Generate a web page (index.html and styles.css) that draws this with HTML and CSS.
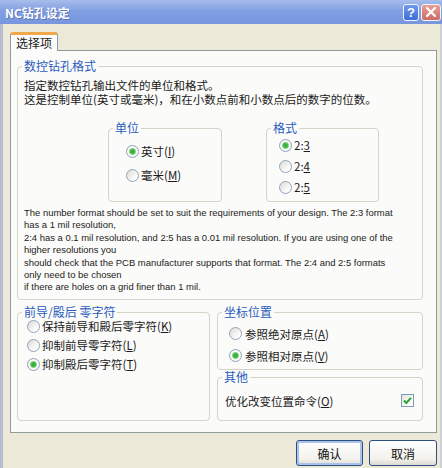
FILE: index.html
```html
<!doctype html>
<html lang="zh-cn">
<head>
	<meta charset="utf-8">
	<title>NC钻孔设定</title>
	<link rel="stylesheet" href="styles.css">
</head>
<body>

<div class="titlebar">
	<span class="title">NC钻孔设定</span>
	<span class="tbtn help">?</span>
	<span class="tbtn close">
		<svg width="12" height="12" viewBox="0 0 12 12"><path d="M2 2L10 10M10 2L2 10" stroke="#fff" stroke-width="2.2" stroke-linecap="round"/></svg>
	</span>
</div>

<div class="body">
	<div class="tabs"><span class="tab">选择项</span></div>

	<div class="panel">
		<div class="group main">
			<div class="gtitle">数控钻孔格式</div>
			<p class="desc">指定数控钻孔输出文件的单位和格式。<br>这是控制单位(英寸或毫米)，和在小数点前和小数点后的数字的位数。</p>

			<div class="subgroups">
				<div class="group unit">
					<div class="gtitle">单位</div>
					<label class="radio"><i class="on"></i>英寸(<u>I</u>)</label>
					<label class="radio"><i></i>毫米(<u>M</u>)</label>
				</div>
				<div class="group fmt">
					<div class="gtitle">格式</div>
					<label class="radio"><i class="on"></i>2:<u>3</u></label>
					<label class="radio"><i></i>2:<u>4</u></label>
					<label class="radio"><i></i>2:<u>5</u></label>
				</div>
			</div>

			<p class="note">The number format should be set to suit the requirements of your design. The 2:3 format<br>has a 1 mil resolution,<br>2:4 has a 0.1 mil resolution, and 2:5 has a 0.01 mil resolution. If you are using one of the<br>higher resolutions you<br>should check that the PCB manufacturer supports that format. The 2:4 and 2:5 formats<br>only need to be chosen<br>if there are holes on a grid finer than 1 mil.</p>
		</div>

		<div class="lower">
			<div class="group zeros">
				<div class="gtitle">前导/殿后 零字符</div>
				<label class="radio"><i></i>保持前导和殿后零字符(<u>K</u>)</label>
				<label class="radio"><i></i>抑制前导零字符(<u>L</u>)</label>
				<label class="radio"><i class="on"></i>抑制殿后零字符(<u>T</u>)</label>
			</div>

			<div class="side">
				<div class="group coords">
					<div class="gtitle">坐标位置</div>
					<label class="radio"><i></i>参照绝对原点(<u>A</u>)</label>
					<label class="radio"><i class="on"></i>参照相对原点(<u>V</u>)</label>
				</div>
				<div class="group other">
					<div class="gtitle">其他</div>
					<label class="check-row">
						<span>优化改变位置命令(<u>O</u>)</span>
						<span class="check"><svg width="11" height="11" viewBox="0 0 11 11"><path d="M2 5.5L4.3 8L9 2.8" fill="none" stroke="#2aa632" stroke-width="2"/></svg></span>
					</label>
				</div>
			</div>
		</div>
	</div>

	<div class="buttons">
		<button class="btn default">确认</button>
		<button class="btn cancel">取消</button>
	</div>
</div>

</body>
</html>
```

FILE: styles.css
```css
*{ margin: 0; padding: 0; box-sizing: border-box }
body{ width: 442px; height: 468px; overflow: hidden; background: #ece9d8; color: #1a1a1a; font-family: "Noto Sans CJK SC", sans-serif; font-size: 11.5px }

/* 标题栏 */
.titlebar{ height: 24px; display: flex; align-items: center; padding: 0 1px 0 5px; color: #fff; background: linear-gradient(#a6bdec, #819fe2 45%, #7796dd) }
.title{ font-weight: bold; font-size: 12px; text-shadow: 1px 1px 0 #5a76b8 }
.tbtn{ height: 17px; border: 1px solid #f2f4fa; border-radius: 3px; display: flex; align-items: center; justify-content: center }
.help{ width: 16px; margin-left: auto; background: linear-gradient(#6f98ec, #3f6dd8); font: bold 13px "Liberation Sans", sans-serif }
.close{ width: 20px; margin-left: 2px; background: linear-gradient(#e7a097, #cb6b62) }

.body{ height: 444px; border-left: 3px solid #b6bed0; border-right: 2px solid #cdd0d6; padding: 8px 3px 0 7px }

/* 选项卡 */
.tabs{ display: flex }
.tab{ position: relative; z-index: 1; width: 48px; height: 19px; margin-bottom: -1px; border: 1px solid #919b9c; border-top: 3px solid #f0a848; border-bottom: none; border-radius: 3px 3px 0 0; background: #fdfdfd; text-align: center; font-size: 12px; line-height: 15px }
.panel{ height: 383px; border: 1px solid #919b9c; background: #fbfbf9; padding: 15px 13px 0 6px }

/* 分组框 */
.group{ border: 1px solid #d3d3c6; border-radius: 4px }
.gtitle{ display: table; margin: -8px 0 0 4px; padding: 0 2px; background: #fbfbf9; color: #2a5bbd; font-size: 12px; line-height: 14px; white-space: nowrap }

.main{ padding: 0 6px 5px 6px }
.main > .gtitle{ margin-left: -2px }
.desc{ margin-top: 5px; line-height: 14px; white-space: nowrap }
.subgroups{ display: flex; gap: 44px; margin-top: 22px; padding-left: 84px }
.unit{ width: 114px; height: 74px; padding-left: 17px }
.unit > .gtitle{ margin-left: -13px }
.fmt{ width: 113px; height: 74px; padding-left: 12px }
.fmt > .gtitle{ margin-left: -8px }
.unit .radio{ margin-top: 8px }
.fmt .radio{ margin-top: 5px }
.fmt .gtitle + .radio{ margin-top: 2px }
.note{ margin-top: 5px; font-family: "Liberation Sans", sans-serif; font-size: 9.45px; line-height: 12.4px; white-space: nowrap; color: #222 }

.radio{ display: flex; align-items: center; height: 16px; white-space: nowrap }
.radio i{ flex: none; width: 13px; height: 13px; margin-right: 2px; border: 1px solid #8ea5bc; border-radius: 50%; background: linear-gradient(135deg, #dcdad2, #fff 80%) }
.radio i.on{ background: radial-gradient(circle, #2ea636 0, #4fbf4f 2.5px, #b9e4b4 3.4px, #fff 4px, #e6e4dc 100%) }
u{ text-decoration: underline; text-underline-offset: 1px }

.lower{ display: flex; gap: 7px; margin-top: 12px }
.zeros{ width: 193px; height: 109px; padding-left: 9px }
.zeros > .gtitle{ margin-left: -5px }
.zeros .radio{ height: 15px; margin-top: 4px }
.zeros .gtitle + .radio{ margin-top: 0 }
.side{ width: 206px; display: flex; flex-direction: column }
.coords{ height: 58px; padding-left: 11px }
.coords > .gtitle{ margin-left: -7px }
.coords .radio{ margin-top: 6px }
.coords .gtitle + .radio{ margin-top: 7px }
.coords .radio i{ margin-right: 3px }
.other{ height: 44px; margin-top: 7px; padding: 0 8px 0 7px }
.other > .gtitle{ margin-left: -3px }
.check-row{ display: flex; align-items: center; justify-content: space-between; height: 16px; margin-top: 9px }
.check{ width: 13px; height: 13px; border: 1px solid #7d9cb8; background: linear-gradient(135deg, #e4e2da, #fff 80%); display: flex; align-items: center; justify-content: center }

/* 按钮 */
.buttons{ display: flex; justify-content: flex-end; gap: 6px; margin-top: 7px }
.btn{ width: 68px; height: 26px; border: 1px solid #2d4f80; border-radius: 3px; background: linear-gradient(#fff, #f3f2ec 75%, #dcdad0); font-family: "Noto Sans CJK SC", sans-serif; font-size: 12px; color: #111 }
.btn.default{ width: 67px; box-shadow: inset 0 0 0 2px #a9c2ee }
```
